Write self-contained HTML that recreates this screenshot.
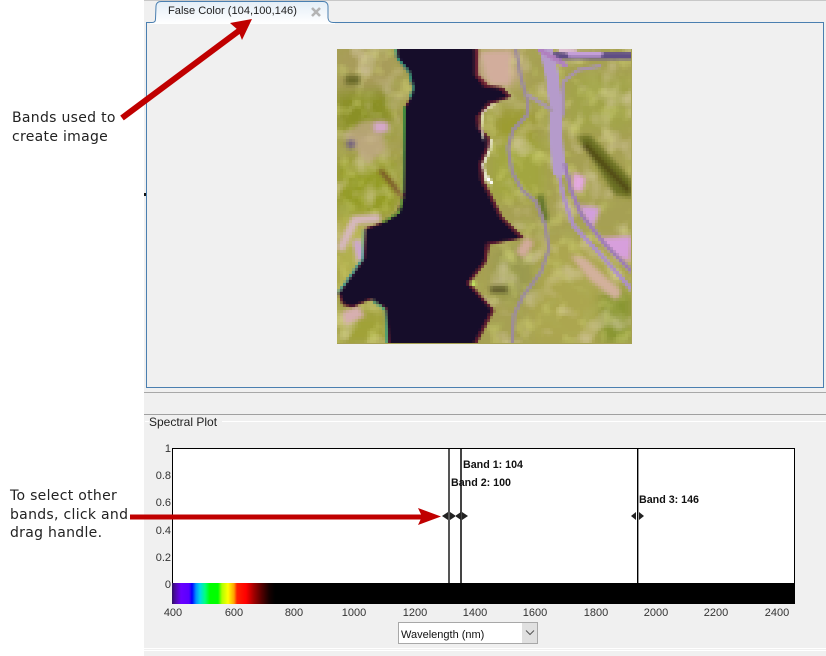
<!DOCTYPE html>
<html><head><meta charset="utf-8"><style>
html,body{margin:0;padding:0;background:#fff}
#p{position:relative;width:826px;height:656px;overflow:hidden;background:#fff;font-family:"Liberation Sans",sans-serif}
#p div{position:absolute}
.t{color:#333;font-size:11px;line-height:13px;white-space:nowrap}
.x{top:607px;width:50px;text-align:center}
.y{left:130px;width:41px;text-align:right}
.a{font-family:"DejaVu Sans",sans-serif;font-size:14px;color:#222;white-space:nowrap}
.b{font-size:10.700px;font-weight:bold;color:#111;white-space:nowrap;line-height:13px}
</style></head><body><div id="p">
<div style="left:144px;top:0;width:682px;height:656px;background:#f0f0f0"></div>
<div style="left:144px;top:0;width:682px;height:1px;background:#c8c8c8"></div>

<div style="left:146px;top:22px;width:676px;height:364px;border:1px solid #4a7fb0;background:#f0f0f0"></div>
<svg style="position:absolute;left:150px;top:0" width="185" height="24"><defs><linearGradient id="tb" x1="0" y1="0" x2="0" y2="1"><stop offset="0" stop-color="#e4eef7"/><stop offset="1" stop-color="#fff"/></linearGradient></defs>
<path d="M-4 22.500H2Q5.500 22.500 5.500 19L6 6Q6.500 1.500 11 1.500H173Q177.500 1.500 178 6V18Q178.500 22.500 183 22.500H185V24H-4Z" fill="url(#tb)"/>
<path d="M-4 22.500H2Q5.500 22.500 5.500 19L6 6Q6.500 1.500 11 1.500H173Q177.500 1.500 178 6V18Q178.500 22.500 183 22.500H185" fill="none" stroke="#4a7fb0"/></svg>
<div style="left:168px;top:4px;font-size:11.100px;line-height:15px;color:#222;white-space:nowrap">False Color (104,100,146)</div>
<svg style="position:absolute;left:310px;top:6px" width="12" height="12"><path d="M2 2L10 10M10 2L2 10" stroke="#b4b4b4" stroke-width="2.600"/></svg>

<svg style="position:absolute;left:337px;top:49px" width="295" height="295" viewBox="337 49 295 295">
<defs>
<filter id="b2" x="-20%" y="-20%" width="140%" height="140%"><feGaussianBlur stdDeviation="2.200"/></filter>
<filter id="b4" x="-30%" y="-30%" width="160%" height="160%"><feGaussianBlur stdDeviation="6"/></filter>
<filter id="b1" x="-10%" y="-10%" width="120%" height="120%"><feGaussianBlur stdDeviation="0.800"/></filter>
<filter id="n" filterUnits="userSpaceOnUse" x="337" y="49" width="295" height="295"><feTurbulence type="fractalNoise" baseFrequency="0.05" numOctaves="2" seed="7"/><feColorMatrix values="0 0 0 0 .42  0 0 0 0 .44  0 0 0 0 .1  3 0 0 0 -1.500"/></filter>
<filter id="n2" filterUnits="userSpaceOnUse" x="337" y="49" width="295" height="295"><feTurbulence type="fractalNoise" baseFrequency="0.045" numOctaves="2" seed="21"/><feColorMatrix values="0 0 0 0 .82  0 0 0 0 .70  0 0 0 0 .56  0 3 0 0 -1.550"/></filter>
<filter id="n3" filterUnits="userSpaceOnUse" x="337" y="49" width="295" height="295"><feTurbulence type="fractalNoise" baseFrequency="0.06" numOctaves="2" seed="43"/><feColorMatrix values="0 0 0 0 .72  0 0 0 0 .74  0 0 0 0 .22  0 0 3 0 -1.600"/></filter>
<filter id="px" filterUnits="userSpaceOnUse" x="337" y="49" width="295" height="295"><feFlood x="338" y="50" width="1" height="1" flood-color="#000"/><feComposite x="337" y="49" width="3" height="3"/><feTile result="a"/><feComposite in="SourceGraphic" in2="a" operator="in"/><feMorphology operator="dilate" radius="1"/></filter>
</defs>
<rect x="337" y="49" width="295" height="295" fill="#a6a052"/>
<g filter="url(#px)">
<rect x="337" y="49" width="295" height="295" fill="#a6a052"/>
<g filter="url(#b4)">
<rect x="337" y="49" width="60" height="50" fill="#a89c5a"/>
<rect x="337" y="90" width="55" height="45" fill="#8a9028"/>
<rect x="337" y="160" width="60" height="55" fill="#949c28"/>
<path d="M337 215L365 215V260L337 300Z" fill="#b4b04c"/>
<rect x="337" y="310" width="50" height="34" fill="#a0a238"/>
<path d="M570 75H632V130H570Z" fill="#a2a44a"/>
<path d="M495 110H535V140H495Z" fill="#9c9c30"/>
<path d="M490 140H545V200H490Z" fill="#a2a640"/>
<path d="M530 240H632V344H530Z" fill="#aca650"/>
<path d="M600 290H632V344H600Z" fill="#889630"/>
<path d="M480 49H520V85H480Z" fill="#c9ab92"/>
<path d="M495 250H535V300H495Z" fill="#9a9a50"/>
</g>
<rect x="337" y="49" width="295" height="295" filter="url(#n)" opacity=".5"/>
<rect x="337" y="49" width="295" height="295" filter="url(#n2)" opacity=".5"/>
<rect x="337" y="49" width="295" height="295" filter="url(#n3)" opacity=".45"/>
<g filter="url(#b2)">
<path d="M577 136L590 135L632 180V198L615 195Z" fill="#6a7024"/>
<path d="M584 144L630 192" stroke="#4f4614" stroke-width="6" fill="none"/>
<path d="M345 75H360V85H345Z" fill="#6b6a2a"/>
<path d="M345 135L360 122L382 120L385 150L368 165Z" fill="#c9ab9a" opacity=".6"/>
<path d="M374 122H388V132H374Z" fill="#d6a8cc"/>
<circle cx="351" cy="144" r="5" fill="#75647e"/>
<path d="M380 170L393 185L400 195" stroke="#6a2f28" stroke-width="3" fill="none"/>
<path d="M340 250L355 220L380 218" stroke="#d7b8c0" stroke-width="8" fill="none"/>
<path d="M356 240L362 260" stroke="#cda6d2" stroke-width="8" fill="none"/>
<path d="M342 312L358 306L365 316L345 325Z" fill="#d7afb0"/>
<path d="M480 52H510V85H490Z" fill="#d2ad9c"/>
<path d="M530 240L520 255" stroke="#d3ab9c" stroke-width="10" fill="none"/>
<path d="M573 172L586 178L582 192L572 190Z" fill="#e4a9e0"/>
<path d="M578 205L600 208L592 230Z" fill="#d29fdc"/>
<path d="M598 238L632 236L630 262L615 256Z" fill="#d79fdc"/>
<path d="M570 255L585 258L622 292L616 300L590 280Z" fill="#d3b09c"/>
<path d="M490 286H508V293H490Z" fill="#5d5a2c"/>
<path d="M540 195L546 222" stroke="#5a7028" stroke-width="6" fill="none"/>
</g>
<g fill="none" stroke-linejoin="round" stroke-linecap="round" filter="url(#b1)">
<path d="M516 50L521 78L528 102L527 115L513 130L508 148L512 172L522 190L536 202L545 225L549 248L541 272L523 296L514 315L512 344" stroke="#9c8a9a" stroke-width="3.500"/>
<path d="M543 49L550 75L555 105L555 138L558 170L563 195L573 225L600 254L632 290" stroke="#ad8fc4" stroke-width="4"/>
<path d="M546 49L552 75L556 105L556 138L559 170" stroke="#b59bcb" stroke-width="13"/>
<path d="M565 165L571 190L581 214L604 243L632 272" stroke="#9e7cb4" stroke-width="4"/>
<path d="M528 95L552 110" stroke="#a995a8" stroke-width="3.500"/>
<path d="M563 115V82L578 70L600 66" stroke="#a990ae" stroke-width="3"/>
<path d="M555 56H632" stroke="#5e4d85" stroke-width="7"/>
<path d="M540 50L565 65" stroke="#b07fbf" stroke-width="5"/>
<path d="M560 50L575 52" stroke="#dcbcd0" stroke-width="4"/>
<path d="M570 54H600" stroke="#c49fd8" stroke-width="5"/>
</g>
<path d="M397 49L396 58L408 72L412 88L410 98L404 107L403 190L402 196L397 212L380 223L365 228L363 258L338 293L342 305L352 308L370 300L385 308L388 344H477L495 310L470 283L487 262L490 245L525 238L503 217L493 197L484 180L483 163L490 147L490 138L481 128L480 117L492 104L512 97L503 87L488 85L478 75L478 49Z" fill="#5b1f2e" filter="url(#b1)"/>
<path d="M398 49L398 58L410 72L414 88L411 98L406 107L405 190L404 197L398 213L381 224L367 229L365 259L340 293L344 303L352 306L371 298L387 308L390 344H473L491 310L466 283L483 262L486 243L520 238L499 217L489 197L480 180L479 163L486 147L486 138L477 128L476 117L488 102L508 97L499 89L484 87L474 75L474 49Z" fill="#14082c" filter="url(#b1)"/>
<g fill="none" filter="url(#b1)">
<path d="M396 49L397 58L409 72L413 88L410 98" stroke="#2f9c7c" stroke-width="2"/>
<path d="M404 107L403 194" stroke="#2d9b3d" stroke-width="2"/>
<path d="M383 222L399 212L403 197" stroke="#6aa93b" stroke-width="2"/>
<path d="M364 230L363 258L338 293" stroke="#3f9c8e" stroke-width="2"/>
<path d="M372 300L385 310L387 344" stroke="#3c9d75" stroke-width="2"/>
<path d="M484 140L481 128L483 112L494 104" stroke="#f0f0d0" stroke-width="1.500"/>
<path d="M491 139L490 150L483 165L487 182" stroke="#eef0dc" stroke-width="2"/>
<path d="M487 177L492 184" stroke="#ffffff" stroke-width="3"/>
<path d="M478 49V75L488 85" stroke="#7a2a38" stroke-width="2"/>
<path d="M471 283L476 284" stroke="#c0e060" stroke-width="4"/>
</g>
</g>
</svg>

<div style="left:144px;top:392px;width:682px;height:1px;background:#a8a8a8"></div>
<div style="left:144px;top:414px;width:682px;height:1px;background:#a0a0a0"></div>
<div style="left:222px;top:421px;width:604px;height:1px;background:#fff"></div>
<div style="left:145px;top:421px;width:4px;height:1px;background:#fff"></div>
<div style="left:149px;top:415px;font-size:12px;line-height:14px;color:#222;white-space:nowrap">Spectral Plot</div>

<div style="left:172px;top:448px;width:621px;height:135px;background:#fff;border:solid #000;border-width:1px 1px 0 1px"></div>
<div style="left:172px;top:583px;width:623px;height:21px;background:linear-gradient(90deg,#2c1060 0,#4a0aa0 3px,#6a00ff 9px,#5a00ff 17px,#0000ff 20px,#0090ff 24px,#00d8e8 28px,#00ff80 33px,#00ff00 38px,#00ff00 46px,#b0ff00 50px,#ffff00 56px,#ffa000 62px,#ff2000 65px,#ff0000 74px,#a00000 82px,#500000 90px,#150000 97px,#000 103px)"></div>
<div style="left:448px;top:449px;width:2px;height:134px;background:#555"></div>
<div style="left:460px;top:449px;width:2px;height:134px;background:#444"></div>
<div style="left:637px;top:449px;width:1px;height:134px;background:#000"></div>
<div style="left:638px;top:449px;width:1px;height:134px;background:#999"></div>

<div class="b" style="left:463px;top:459px">Band 1: 104</div>
<div class="b" style="left:451px;top:477px">Band 2: 100</div>
<div class="b" style="left:639px;top:494px">Band 3: 146</div>
<svg style="position:absolute;left:440px;top:510px" width="210" height="12"><g fill="#222"><path d="M2 6L8 2V10ZM16 6L10 2V10ZM15 6L21 2V10ZM28 6L22 2V10ZM191 6L196 2V10ZM204 6L199 2V10Z"/></g></svg>

<div class="t y" style="top:443px">1</div>
<div class="t y" style="top:470px">0.8</div>
<div class="t y" style="top:497px">0.6</div>
<div class="t y" style="top:525px">0.4</div>
<div class="t y" style="top:552px">0.2</div>
<div class="t y" style="top:579px">0</div>
<div class="t x" style="left:148px">400</div>
<div class="t x" style="left:209px">600</div>
<div class="t x" style="left:269px">800</div>
<div class="t x" style="left:329px">1000</div>
<div class="t x" style="left:390px">1200</div>
<div class="t x" style="left:450px">1400</div>
<div class="t x" style="left:510px">1600</div>
<div class="t x" style="left:571px">1800</div>
<div class="t x" style="left:631px">2000</div>
<div class="t x" style="left:691px">2200</div>
<div class="t x" style="left:752px">2400</div>

<div style="left:398px;top:622px;width:138px;height:20px;background:#fff;border:1px solid #a8a8a8"></div>
<div style="left:522px;top:623px;width:15px;height:20px;background:#e0e0e0"></div>
<svg style="position:absolute;left:525px;top:629px" width="10" height="8"><path d="M1 1.500L5 5.500L9 1.500" fill="none" stroke="#555"/></svg>
<div style="left:401px;top:628px;font-size:11px;line-height:14px;color:#111;white-space:nowrap">Wavelength (nm)</div>

<div style="left:144px;top:648px;width:682px;height:1px;background:#fff"></div>
<div style="left:144px;top:650px;width:682px;height:1px;background:#fff"></div>

<div class="a" style="left:12px;top:109px;line-height:19px;letter-spacing:.3px">Bands used to<br>create image</div>
<div class="a" style="left:10px;top:487px;line-height:18.500px;letter-spacing:.3px">To select other<br>bands, click and<br>drag handle.</div>

<svg style="position:absolute;left:0;top:0" width="826" height="656">
<path d="M122 118L240 30" stroke="#c00000" stroke-width="6" fill="none"/>
<path d="M252 19L230 23L238 30L242 40Z" fill="#c00000"/>
<path d="M130 517H425" stroke="#c00000" stroke-width="5" fill="none"/>
<path d="M441 516.500L418 508L422 516.500L418 525Z" fill="#c00000"/>
<rect x="144" y="193" width="2" height="3" fill="#111"/>
</svg>
</div></body></html>
